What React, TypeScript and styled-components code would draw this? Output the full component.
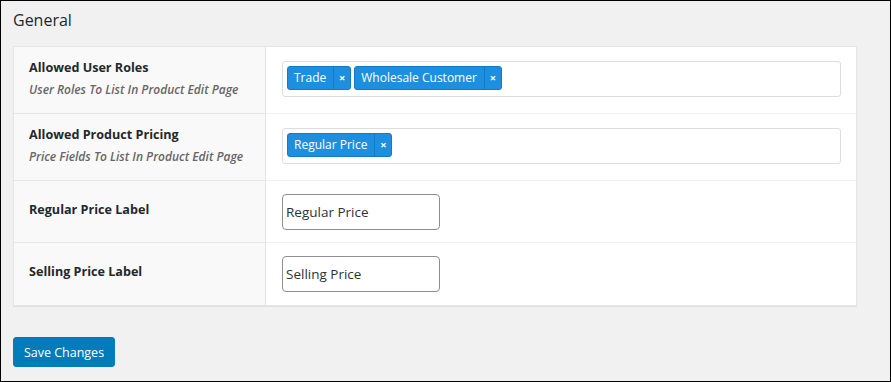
import React from "react";
import styled, { createGlobalStyle } from "styled-components";

const GlobalStyle = createGlobalStyle`
  html, body { margin: 0; padding: 0; background: #f1f1f1; }
  body { font-family: "Open Sans", "Noto Sans", sans-serif; color: #23282d; }
  * { box-sizing: border-box; }
`;

const Frame = styled.div`
  width: 891px;
  height: 382px;
  border: 1px solid #000;
  background: #f1f1f1;
  padding: 0 0 0 12px;
  display: flex;
  flex-direction: column;
`;

const Heading = styled.h2`
  margin: 8px 0 0 0;
  height: 37px;
  font-size: 16px;
  font-weight: 400;
  color: #23282d;
  line-height: 22px;
`;

const Table = styled.div`
  width: 844px;
  background: #fff;
  border: 1px solid #e5e5e5;
  box-shadow: 0 1px 1px rgba(0, 0, 0, 0.06);
  display: flex;
  flex-direction: column;
`;

const Row = styled.div<{ $h: number; $last?: boolean }>`
  display: grid;
  grid-template-columns: 252px 1fr;
  height: ${(p) => p.$h}px;
  border-bottom: ${(p) => (p.$last ? "none" : "1px solid #f0f0f0")};
`;

const Th = styled.div<{ $last?: boolean }>`
  background: #f9f9f9;
  border-right: 1px solid #e5e5e5;
  border-bottom: ${(p) => (p.$last ? "none" : "1px solid #e5e5e5")};
  margin-bottom: ${(p) => (p.$last ? "0" : "-1px")};
  padding: 0 0 4px 15px;
  display: flex;
  flex-direction: column;
  justify-content: center;
`;

const Label = styled.div`
  font-size: 12.6px;
  font-weight: 700;
  color: #23282d;
  line-height: 18px;
`;

const Desc = styled.div`
  font-size: 12px;
  font-style: italic;
  font-weight: 600;
  color: #666;
  line-height: 17px;
  margin-top: 4px;
`;

const Td = styled.div`
  padding-left: 16px;
  display: flex;
  align-items: center;
`;

const MultiSelect = styled.div`
  width: 559px;
  height: 36px;
  margin-top: -2px;
  border: 1px solid #ddd;
  border-radius: 3px;
  background: #fff;
  padding: 4px;
  display: flex;
  align-items: flex-start;
  gap: 3px;
`;

const Tag = styled.div`
  display: flex;
  height: 24px;
  background: #1e8fde;
  border: 1px solid #127bc4;
  border-radius: 3px;
  color: #fff;
  font-size: 12px;
  line-height: 22px;
`;

const TagText = styled.span`
  padding: 0 7px 0 6px;
`;

const TagRemove = styled.span`
  width: 17px;
  border-left: 1px solid #127bc4;
  display: flex;
  align-items: center;
  justify-content: center;
  font-size: 11px;
  font-weight: 700;
`;

const Input = styled.input`
  width: 158px;
  height: 36px;
  border: 1px solid #8c8f94;
  border-radius: 4px;
  padding: 0 3px;
  font-family: "Open Sans", "Noto Sans", sans-serif;
  font-size: 13.5px;
  color: #2c3338;
  background: #fff;
  outline: none;
`;

const Footer = styled.div`
  padding-top: 31px;
`;

const Button = styled.button`
  width: 102px;
  height: 30px;
  background: #007cba;
  border: 1px solid #007cba;
  border-radius: 3px;
  color: #fff;
  font-family: "Open Sans", "Noto Sans", sans-serif;
  font-size: 12.5px;
  padding: 0;
`;

const rows = [
  {
    label: "Allowed User Roles",
    desc: "User Roles To List In Product Edit Page",
    tags: ["Trade", "Wholesale Customer"],
    h: 67,
  },
  {
    label: "Allowed Product Pricing",
    desc: "Price Fields To List In Product Edit Page",
    tags: ["Regular Price"],
    h: 67,
  },
  { label: "Regular Price Label", value: "Regular Price", h: 62 },
  { label: "Selling Price Label", value: "Selling Price", h: 62 },
];

export default function App() {
  return (
    <>
      <GlobalStyle />
      <Frame>
        <Heading>General</Heading>
        <Table>
          {rows.map((r, i) => {
            const last = i === rows.length - 1;
            return (
              <Row key={r.label} $h={r.h} $last={last}>
                <Th $last={last}>
                  <Label>{r.label}</Label>
                  {r.desc && <Desc>{r.desc}</Desc>}
                </Th>
                <Td>
                  {r.tags ? (
                    <MultiSelect>
                      {r.tags.map((t) => (
                        <Tag key={t}>
                          <TagText>{t}</TagText>
                          <TagRemove>×</TagRemove>
                        </Tag>
                      ))}
                    </MultiSelect>
                  ) : (
                    <Input defaultValue={r.value} />
                  )}
                </Td>
              </Row>
            );
          })}
        </Table>
        <Footer>
          <Button>Save Changes</Button>
        </Footer>
      </Frame>
    </>
  );
}
